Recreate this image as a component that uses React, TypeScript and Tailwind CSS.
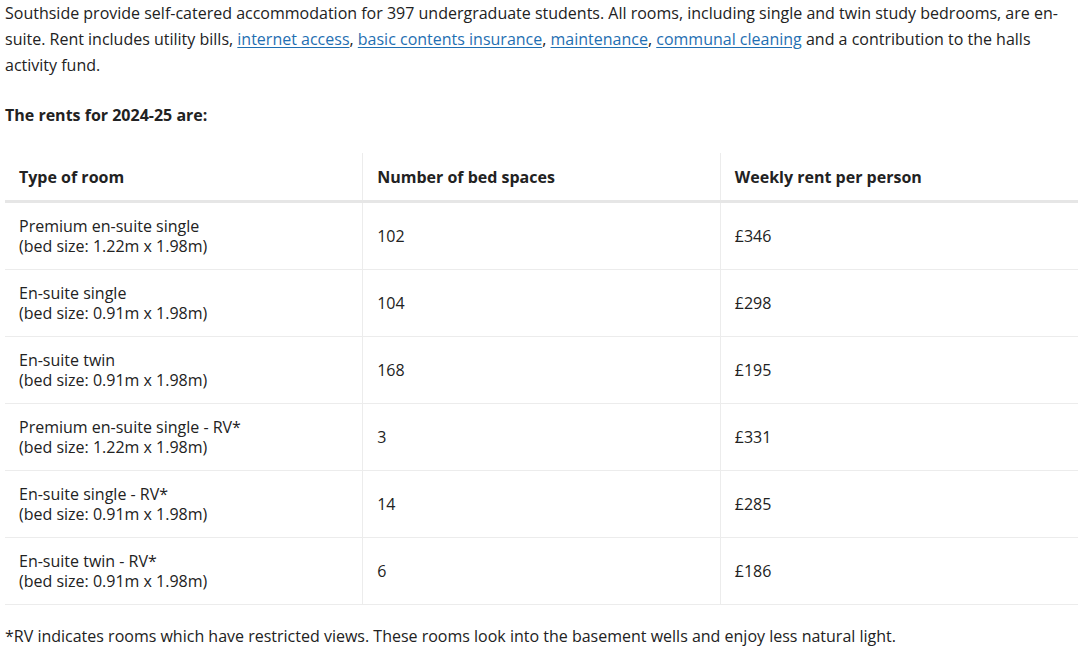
import React from 'react';

const rows = [
  { type: 'Premium en-suite single', bed: '1.22m x 1.98m', spaces: '102', rent: '£346' },
  { type: 'En-suite single', bed: '0.91m x 1.98m', spaces: '104', rent: '£298' },
  { type: 'En-suite twin', bed: '0.91m x 1.98m', spaces: '168', rent: '£195' },
  { type: 'Premium en-suite single - RV*', bed: '1.22m x 1.98m', spaces: '3', rent: '£331' },
  { type: 'En-suite single - RV*', bed: '0.91m x 1.98m', spaces: '14', rent: '£285' },
  { type: 'En-suite twin - RV*', bed: '0.91m x 1.98m', spaces: '6', rent: '£186' },
];

const Link = ({ children }: { children: React.ReactNode }) => (
  <a href="#" className="text-[#1f6fb2] underline underline-offset-2">
    {children}
  </a>
);

export default function App() {
  return (
    <div className="min-h-screen bg-white pl-[5px] font-['Open_Sans','Liberation_Sans',sans-serif] text-[16px] text-[#222]">
      <div className="w-[1073px]">
        <p className="leading-[26px] whitespace-nowrap">
          Southside provide self-catered accommodation for 397 undergraduate students. All rooms, including single and
          twin study bedrooms, are en-
          <br />
          suite. Rent includes utility bills, <Link>internet access</Link>, <Link>basic contents insurance</Link>,{' '}
          <Link>maintenance</Link>, <Link>communal cleaning</Link> and a contribution to the halls
          <br />
          activity fund.
        </p>

        <p className="mt-[24px] font-bold leading-[26px]">The rents for 2024-25 are:</p>

        <table className="mt-[25px] w-full table-fixed border-collapse">
          <thead>
            <tr className="border-b-[3px] border-[#e6e6e6]">
              <th className="border-r border-[#ececec] px-[14px] pt-[14px] pb-[13px] text-left font-bold leading-5">Type of room</th>
              <th className="border-r border-[#ececec] px-[14px] pt-[14px] pb-[13px] text-left font-bold leading-5">Number of bed spaces</th>
              <th className="px-[14px] pt-[14px] pb-[13px] text-left font-bold leading-5">Weekly rent per person</th>
            </tr>
          </thead>
          <tbody>
            {rows.map((r) => (
              <tr key={r.type} className="border-b border-[#ececec]">
                <td className="border-r border-[#ececec] px-[14px] py-[13px] leading-5">
                  {r.type}
                  <br />
                  (bed size: {r.bed})
                </td>
                <td className="border-r border-[#ececec] px-[14px] py-[13px] leading-5">{r.spaces}</td>
                <td className="px-[14px] py-[13px] leading-5">{r.rent}</td>
              </tr>
            ))}
          </tbody>
        </table>

        <p className="mt-[18px] leading-[26px]">
          *RV indicates rooms which have restricted views. These rooms look into the basement wells and enjoy less
          natural light.
        </p>
      </div>
    </div>
  );
}
